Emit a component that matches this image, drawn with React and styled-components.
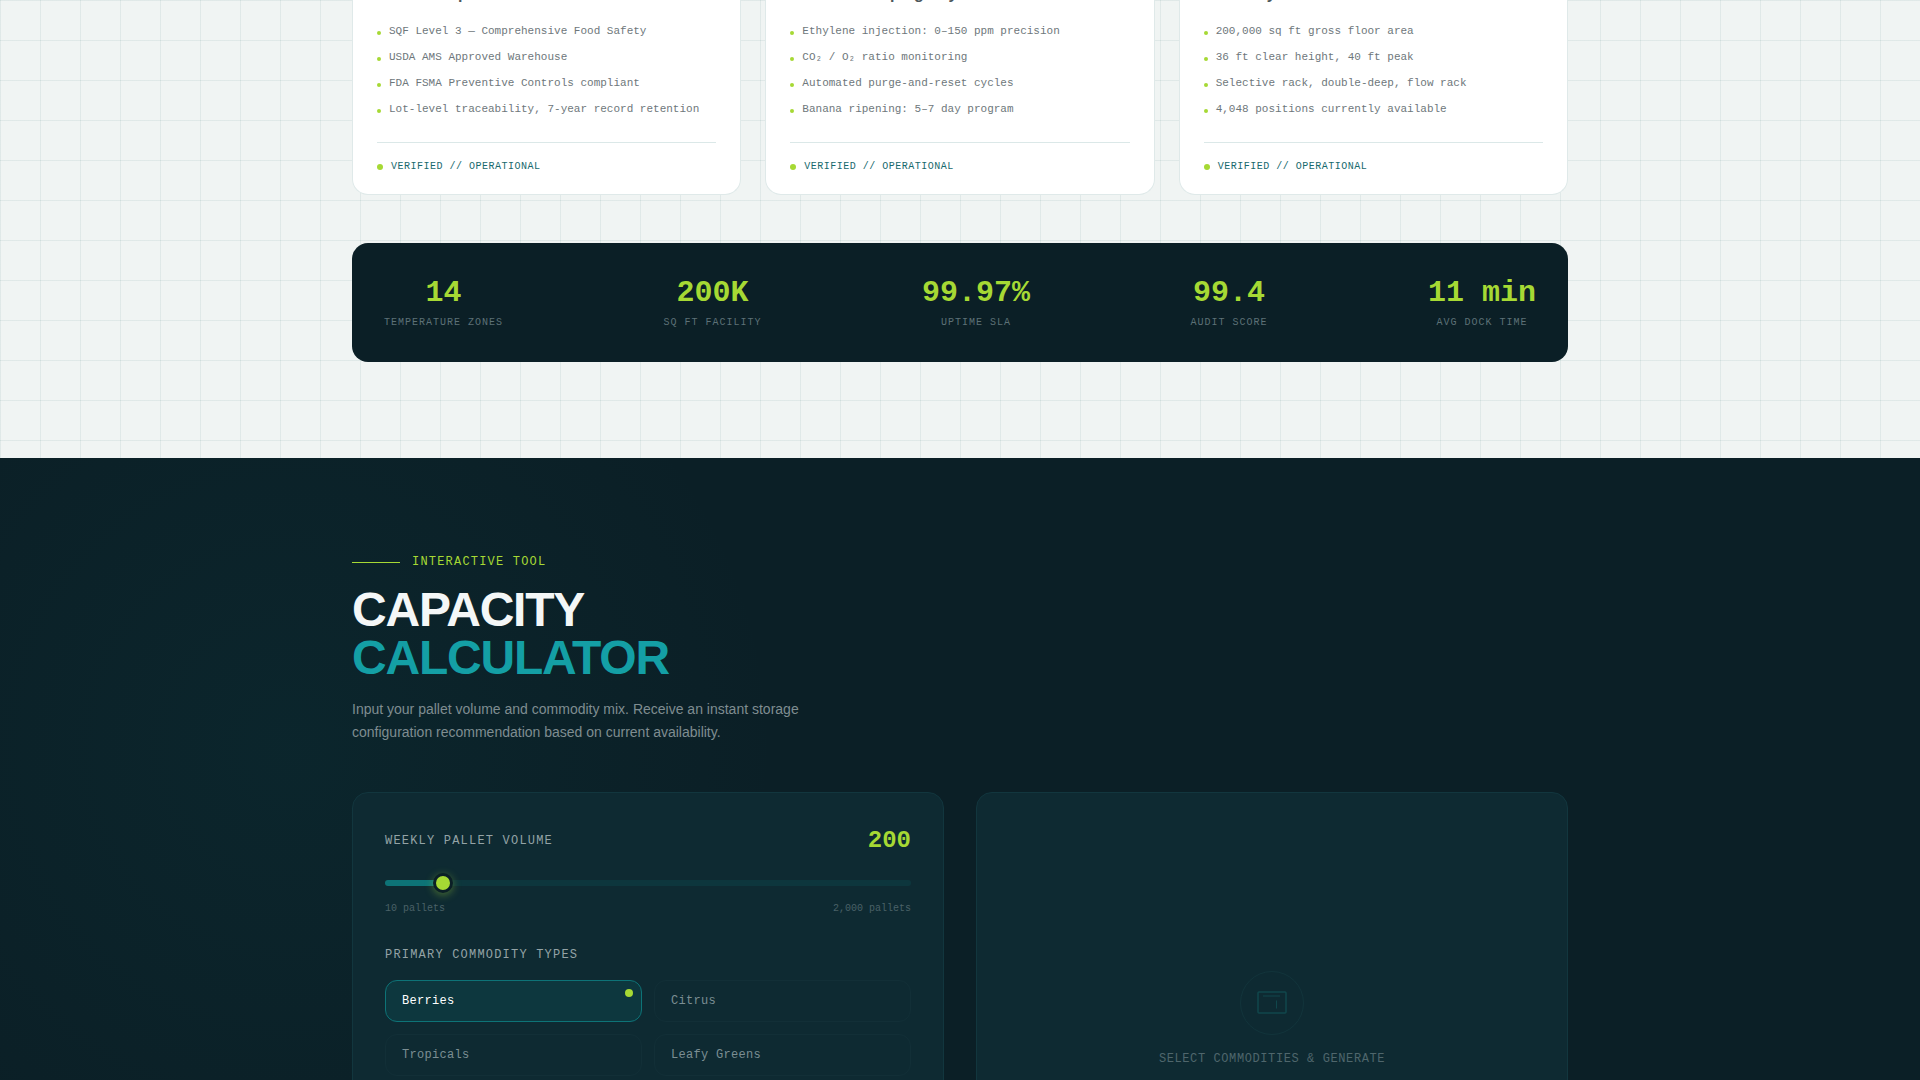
import React, { useState } from "react";
import styled, { createGlobalStyle } from "styled-components";

const mono = `"Liberation Mono", "Courier New", monospace`;
const sans = `"Liberation Sans", Arial, sans-serif`;
const lime = "#a6d934";

const GlobalStyle = createGlobalStyle`
  *, *::before, *::after { box-sizing: border-box; }
  body { margin: 0; background: #0b1f26; font-family: ${sans}; }
  h2, h3, p, ul, dl, dd { margin: 0; padding: 0; }
  button, input { font: inherit; margin: 0; }
`;

const Page = styled.div`
  height: 100vh;
  overflow: hidden;
`;

const Container = styled.div`
  position: relative;
  max-width: 1280px;
  margin: 0 auto;
  padding: 0 32px;
`;

const SpecsSection = styled.section`
  overflow: hidden;
  padding-bottom: 96px;
  background-color: #f0f4f3;
  background-image:
    linear-gradient(rgba(13, 80, 84, 0.07) 1px, transparent 1px),
    linear-gradient(90deg, rgba(13, 80, 84, 0.07) 1px, transparent 1px);
  background-size: 40px 40px;
`;

const CardGrid = styled.div`
  display: grid;
  grid-template-columns: repeat(3, 1fr);
  gap: 24px;
  margin-top: -18px;
`;

const Card = styled.article`
  padding: 0 24px 20px;
  background: #ffffff;
  border: 1px solid #dfe9e9;
  border-top: 0;
  border-radius: 0 0 16px 16px;
`;

const CardTitle = styled.h3`
  margin-bottom: 16px;
  font-size: 16px;
  line-height: 24px;
  font-weight: 700;
  color: #4d575b;
`;

const FeatureList = styled.ul`
  display: flex;
  flex-direction: column;
  gap: 8px;
  margin-bottom: 24px;
  list-style: none;
`;

const Feature = styled.li`
  display: flex;
  align-items: center;
  gap: 8px;
  font: 11px/18px ${mono};
  color: #6e777b;
`;

const Dot = styled.span`
  flex: none;
  width: ${(p) => p.$size}px;
  height: ${(p) => p.$size}px;
  border-radius: 50%;
  background: ${lime};
`;

const FeatureDot = styled(Dot)`
  margin-top: 4px;
`;

const CardStatus = styled.p`
  display: flex;
  align-items: center;
  gap: 8px;
  padding-top: 16px;
  border-top: 1px solid #dbe8e8;
  font: 10px/15px ${mono};
  letter-spacing: 0.05em;
  text-transform: uppercase;
  color: #17696d;
`;

const StatsBar = styled.dl`
  display: flex;
  justify-content: space-between;
  margin-top: 48px;
  padding: 32px;
  border-radius: 16px;
  background: #0b1f26;
`;

const Stat = styled.div`
  display: flex;
  flex-direction: column-reverse;
  gap: 4px;
  text-align: center;
`;

const StatValue = styled.dd`
  font: 700 30px/36px ${mono};
  color: ${lime};
`;

const StatLabel = styled.dt`
  font: 10px/15px ${mono};
  letter-spacing: 0.1em;
  text-transform: uppercase;
  color: #5d7177;
`;

const CalculatorSection = styled.section`
  padding: 96px 0;
  background:
    radial-gradient(circle at 290px 290px, rgba(13, 115, 119, 0.08), transparent 490px),
    #0b1f26;
`;

const Eyebrow = styled.p`
  display: flex;
  align-items: center;
  gap: 12px;
  margin-bottom: 16px;
  font: 12px/16px ${mono};
  letter-spacing: 0.1em;
  text-transform: uppercase;
  color: ${lime};

  &::before {
    content: "";
    width: 48px;
    height: 1px;
    background: ${lime};
  }
`;

const Heading = styled.h2`
  margin-bottom: 16px;
  font-size: 48px;
  line-height: 48px;
  font-weight: 700;
  letter-spacing: -0.025em;
  color: #f4f7f7;
`;

const HeadingAccent = styled.span`
  display: block;
  color: #149fa5;
`;

const Lead = styled.p`
  max-width: 480px;
  margin-bottom: 48px;
  font-size: 14px;
  line-height: 23px;
  color: #7f8d91;
`;

const PanelGrid = styled.div`
  display: grid;
  grid-template-columns: 1fr 1fr;
  gap: 32px;
`;

const Panel = styled.div`
  min-height: 480px;
  padding: 32px;
  border: 1px solid #12363e;
  border-radius: 16px;
  background: #0e2a32;
`;

const ResultPanel = styled(Panel)`
  display: flex;
  flex-direction: column;
  align-items: center;
  gap: 16px;
  padding-top: 178px;
`;

const FieldHead = styled.div`
  display: flex;
  align-items: center;
  justify-content: space-between;
  margin-bottom: 16px;
`;

const fieldText = `
  font: 12px/18px ${mono};
  letter-spacing: 0.1em;
  text-transform: uppercase;
  color: #94a3a6;
`;

const FieldLabel = styled.label`
  ${fieldText}
`;

const Volume = styled.output`
  font: 700 24px/32px ${mono};
  color: ${lime};
`;

const Slider = styled.input`
  display: block;
  width: 100%;
  height: 20px;
  appearance: none;
  background: transparent;
  cursor: pointer;

  &::-webkit-slider-runnable-track {
    height: 6px;
    border-radius: 3px;
    background: linear-gradient(
      to right,
      #0d7377 ${(p) => p.$fill}%,
      #0d363d ${(p) => p.$fill}%
    );
  }

  &::-webkit-slider-thumb {
    appearance: none;
    width: 20px;
    height: 20px;
    margin-top: -7px;
    border: 3px solid #0b1f26;
    border-radius: 50%;
    background: ${lime};
    box-shadow: 0 2px 8px rgba(166, 217, 52, 0.4);
  }
`;

const Range = styled.div`
  display: flex;
  justify-content: space-between;
  margin: 8px 0 30px;
  font: 10px/15px ${mono};
  color: #4a6167;
`;

const Commodities = styled.fieldset`
  margin: 0;
  padding: 0;
  border: 0;
`;

const Legend = styled.legend`
  padding: 0;
  margin-bottom: 16px;
  ${fieldText}
`;

const ChipGrid = styled.div`
  display: grid;
  grid-template-columns: 1fr 1fr;
  gap: 12px;
`;

const Chip = styled.button`
  position: relative;
  padding: 11px 16px;
  border: 1px solid ${(p) => (p.$active ? "#0d7377" : "#122f37")};
  border-radius: 12px;
  background: ${(p) => (p.$active ? "#0d373e" : "transparent")};
  font: 12px/18px ${mono};
  letter-spacing: 0.025em;
  text-align: left;
  color: ${(p) => (p.$active ? "#ffffff" : "#7b8e93")};
  cursor: pointer;
`;

const ChipDot = styled(Dot)`
  position: absolute;
  top: 8px;
  right: 8px;
`;

const EmptyIcon = styled.div`
  display: grid;
  place-items: center;
  width: 64px;
  height: 64px;
  border: 1px solid #12343b;
  border-radius: 50%;
  color: #10474c;
`;

const EmptyText = styled.p`
  font: 12px/16px ${mono};
  letter-spacing: 0.05em;
  text-transform: uppercase;
  color: #4f666c;
`;

const cards = [
  {
    title: "Audit Compliance",
    items: [
      "SQF Level 3 — Comprehensive Food Safety",
      "USDA AMS Approved Warehouse",
      "FDA FSMA Preventive Controls compliant",
      "Lot-level traceability, 7-year record retention",
    ],
  },
  {
    title: "Controlled Piping Bay",
    items: [
      "Ethylene injection: 0–150 ppm precision",
      "CO₂ / O₂ ratio monitoring",
      "Automated purge-and-reset cycles",
      "Banana ripening: 5–7 day program",
    ],
  },
  {
    title: "Inventory",
    items: [
      "200,000 sq ft gross floor area",
      "36 ft clear height, 40 ft peak",
      "Selective rack, double-deep, flow rack",
      "4,048 positions currently available",
    ],
  },
];

const stats = [
  ["14", "Temperature Zones"],
  ["200K", "Sq Ft Facility"],
  ["99.97%", "Uptime SLA"],
  ["99.4", "Audit Score"],
  ["11 min", "Avg Dock Time"],
];

const commodities = ["Berries", "Citrus", "Tropicals", "Leafy Greens"];

const MIN = 10;
const MAX = 2000;

export default function App() {
  const [volume, setVolume] = useState(200);
  const [selected, setSelected] = useState(["Berries"]);

  const toggle = (name) =>
    setSelected((list) =>
      list.includes(name) ? list.filter((n) => n !== name) : [...list, name]
    );

  return (
    <Page>
      <GlobalStyle />
      <SpecsSection>
        <Container>
          <CardGrid>
            {cards.map((card) => (
              <Card key={card.title}>
                <CardTitle>{card.title}</CardTitle>
                <FeatureList>
                  {card.items.map((item) => (
                    <Feature key={item}>
                      <FeatureDot $size={4} />
                      {item}
                    </Feature>
                  ))}
                </FeatureList>
                <CardStatus>
                  <Dot $size={6} />
                  Verified // Operational
                </CardStatus>
              </Card>
            ))}
          </CardGrid>
          <StatsBar>
            {stats.map(([value, label]) => (
              <Stat key={label}>
                <StatLabel>{label}</StatLabel>
                <StatValue>{value}</StatValue>
              </Stat>
            ))}
          </StatsBar>
        </Container>
      </SpecsSection>

      <CalculatorSection>
        <Container>
          <Eyebrow>Interactive Tool</Eyebrow>
          <Heading>
            CAPACITY
            <HeadingAccent>CALCULATOR</HeadingAccent>
          </Heading>
          <Lead>
            Input your pallet volume and commodity mix. Receive an instant storage
            configuration recommendation based on current availability.
          </Lead>
          <PanelGrid>
            <Panel>
              <FieldHead>
                <FieldLabel htmlFor="volume">Weekly Pallet Volume</FieldLabel>
                <Volume htmlFor="volume">{volume}</Volume>
              </FieldHead>
              <Slider
                id="volume"
                type="range"
                min={MIN}
                max={MAX}
                step={10}
                value={volume}
                $fill={((volume - MIN) / (MAX - MIN)) * 100}
                onChange={(e) => setVolume(Number(e.target.value))}
              />
              <Range>
                <span>10 pallets</span>
                <span>2,000 pallets</span>
              </Range>
              <Commodities>
                <Legend>Primary Commodity Types</Legend>
                <ChipGrid>
                  {commodities.map((name) => {
                    const active = selected.includes(name);
                    return (
                      <Chip
                        key={name}
                        type="button"
                        aria-pressed={active}
                        $active={active}
                        onClick={() => toggle(name)}
                      >
                        {name}
                        {active && <ChipDot $size={8} />}
                      </Chip>
                    );
                  })}
                </ChipGrid>
              </Commodities>
            </Panel>
            <ResultPanel>
              <EmptyIcon>
                <svg width="32" height="32" viewBox="0 0 32 32" fill="none" stroke="currentColor" strokeWidth="1.5" aria-hidden="true">
                  <rect x="2" y="5" width="28" height="21" rx="1" />
                  <path d="M7 9h17M20.5 13.5v8" strokeWidth="1" />
                </svg>
              </EmptyIcon>
              <EmptyText>Select commodities &amp; generate</EmptyText>
            </ResultPanel>
          </PanelGrid>
        </Container>
      </CalculatorSection>
    </Page>
  );
}
